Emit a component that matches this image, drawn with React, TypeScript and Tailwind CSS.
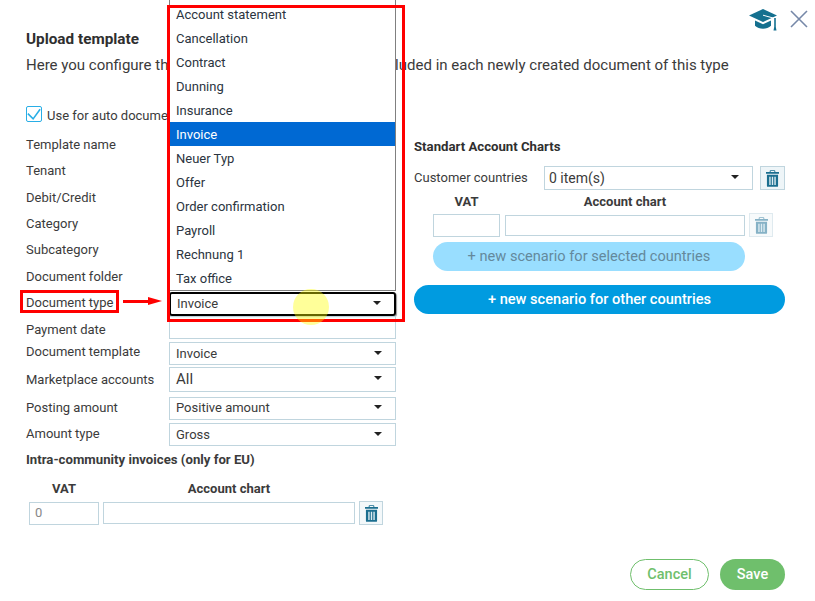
import React from 'react';

// --- Icons ---
const TrashIcon: React.FC<{ className?: string }> = ({ className }) => (
  <svg viewBox="0 0 14 18" className={className} fill="currentColor">
    <path d="M5 0h4a1 1 0 011 1v1h4v2H0V2h4V1a1 1 0 011-1zm0 1v1h4V1z" fillRule="evenodd" />
    <path d="M1 5h12v12a1 1 0 01-1 1H2a1 1 0 01-1-1z" />
    <path d="M3.5 7h1.5v9H3.5zM6.25 7h1.5v9h-1.5zM9 7h1.5v9H9z" fill="#dcebf1" />
  </svg>
);

const CapIcon: React.FC<{ className?: string }> = ({ className }) => (
  <svg viewBox="0 0 29 22" className={className} fill="currentColor">
    <path d="M14 0l14 6.5L14 13 0 6.5z" />
    <path d="M6 11.5l8 3.7 8-3.7v5.2c-2 2-5 3-8 3s-6-1-8-3z" />
    <path d="M14 6.2l11.5 3.2" fill="none" stroke="#fff" strokeWidth="1" />
    <path d="M25.2 9h1.6v9l.7 3.5h-3l.7-3.5z" />
  </svg>
);

const Caret: React.FC = () => <span className="ml-auto mr-[13px] mb-[2px] h-0 w-0 border-x-[4.5px] border-t-[4.5px] border-x-transparent border-t-[#222]" />;

// --- Form pieces ---
const SelectBox: React.FC<{ value?: string; className?: string; caret?: boolean }> = ({ value, className = '', caret = true }) => (
  <div className={`flex w-[227px] items-center border border-[#c0d5de] pl-[6px] text-[13px] text-[#3b3b3b] ${className}`}>
    <span>{value}</span>
    {caret && <Caret />}
  </div>
);

const rows = [
  { label: 'Template name', rowH: 'h-[26px]', ctlH: 'h-[23px]', value: '', caret: false },
  { label: 'Tenant', rowH: 'h-[26px]', ctlH: 'h-[23px]', value: '', caret: true },
  { label: 'Debit/Credit', rowH: 'h-[27px]', ctlH: 'h-[23px]', value: '', caret: true },
  { label: 'Category', rowH: 'h-[26px]', ctlH: 'h-[23px]', value: '', caret: true },
  { label: 'Subcategory', rowH: 'h-[26px]', ctlH: 'h-[23px]', value: '', caret: true },
  { label: 'Document folder', rowH: 'h-[27px]', ctlH: 'h-[23px]', value: '', caret: true },
];

const lowerRows = [
  { label: 'Payment date', rowH: 'h-[25px]', ctlH: 'h-[23px]', value: '', caret: false, ctlClass: '-mt-[3px]', labelClass: 'mt-[3px]' },
  { label: 'Document template', rowH: 'h-[25px]', ctlH: 'h-[23px]', value: 'Invoice', caret: true, ctlClass: '', labelClass: '-mt-[3px]' },
  { label: 'Marketplace accounts', rowH: 'h-[28px]', ctlH: 'h-[25px]', value: 'All', caret: true, ctlClass: '-mt-[2px] text-[15px]', labelClass: '' },
  { label: 'Posting amount', rowH: 'h-[28px]', ctlH: 'h-[23px]', value: 'Positive amount', caret: true, ctlClass: '', labelClass: '' },
  { label: 'Amount type', rowH: 'h-[26px]', ctlH: 'h-[23px]', value: 'Gross', caret: true, ctlClass: '-mt-[1px]', labelClass: '-mt-[2px]' },
];

const options = ['Account statement', 'Cancellation', 'Contract', 'Dunning', 'Insurance', 'Invoice', 'Neuer Typ', 'Offer', 'Order confirmation', 'Payroll', 'Rechnung 1', 'Tax office'];

export default function App() {
  return (
    <div className="relative h-[601px] w-[815px] overflow-hidden bg-white font-['Roboto',sans-serif] text-[13px] text-[#3b3b3b]">
      {/* top icons */}
      <div className="flex h-[30px] items-start justify-end pr-[6px] pt-[6px]">
        <CapIcon className="mr-[11px] mt-[3px] h-[22px] w-[29px] text-[#14708f]" />
        <svg viewBox="0 0 20 20" className="mt-[3px] h-[20px] w-[20px] text-[#7688a8]" stroke="currentColor" strokeWidth="1.6" fill="none">
          <path d="M2 2l16 16M18 2L2 18" />
        </svg>
      </div>

      <div className="pl-[26px]">
        <h1 className="mt-[0px] text-[15.3px] font-bold leading-[18px] text-[#2f2f2f]">Upload template</h1>
        <p className="mt-[8px] text-[15.02px] leading-[18px] text-[#3b3b3b]">
          Here you configure the standard data that should be included in each newly created document of this type
        </p>
        <label className="mt-[31px] flex h-[18px] items-center">
          <span className="flex h-[16px] w-[16px] items-center justify-center rounded-[2px] border border-[#29aee6]">
            <svg viewBox="0 0 16 16" className="h-[15px] w-[15px]" fill="none" stroke="#29aee6" strokeWidth="1.8">
              <path d="M1 7l6 6 8-11" />
            </svg>
          </span>
          <span className="ml-[5px] mt-[3px] whitespace-nowrap">Use for auto document creation</span>
        </label>
      </div>

      <div className="mt-[9px] flex pl-[26px]">
        {/* left column */}
        <div className="w-[388px]">
          {rows.map(r => (
            <div key={r.label} className={`flex items-center ${r.rowH}`}>
              <span className="w-[143px] shrink-0">{r.label}</span>
              <SelectBox className={r.ctlH} value={r.value} caret={r.caret} />
            </div>
          ))}

          <div className="flex h-[26px] items-center">
            <span className="w-[143px] shrink-0">Document type</span>
            <SelectBox className="mt-[2px] h-[24px] rounded-[3px] border-[2px] !border-black shadow-[1px_1px_1px_#999]" value="Invoice" />
          </div>

          {lowerRows.map(r => (
            <div key={r.label} className={`flex items-center ${r.rowH}`}>
              <span className={`w-[143px] shrink-0 ${r.labelClass}`}>{r.label}</span>
              <SelectBox className={`${r.ctlH} ${r.ctlClass}`} value={r.value} caret={r.caret} />
            </div>
          ))}

          <h2 className="mt-[4px] text-[13.2px] font-bold leading-[16px]">Intra-community invoices (only for EU)</h2>
          <div className="ml-[3px] mt-[13px] flex text-[13px] font-bold leading-[16px]">
            <span className="w-[70px] text-center">VAT</span>
            <span className="ml-[4px] w-[252px] text-center">Account chart</span>
          </div>
          <div className="ml-[3px] mt-[4px] flex items-center">
            <div className="flex h-[23px] w-[70px] items-center border border-[#c0d5de] pl-[5px] text-[#888]">0</div>
            <div className="ml-[4px] h-[22px] w-[252px] border border-[#c0d5de]" />
            <button className="ml-[4px] flex h-[24px] w-[24px] items-center justify-center border border-[#c0d5de] bg-[#f3f8fa] text-[#1b6e8f]">
              <TrashIcon className="h-[17px] w-[13px]" />
            </button>
          </div>
        </div>

        {/* right column */}
        <div className="w-[371px]">
          <h2 className="mt-[7px] text-[13.2px] font-bold leading-[16px] text-[#2f2f2f]">Standart Account Charts</h2>
          <div className="mt-[11px] flex h-[24px] items-center">
            <span className="w-[130px] shrink-0">Customer countries</span>
            <div className="flex h-[24px] w-[209px] items-center border border-[#c0d5de] pl-[4px] text-[14px]">
              <span>0 item(s)</span>
              <Caret />
            </div>
            <button className="ml-[7px] flex h-[24px] w-[25px] items-center justify-center border border-[#c0d5de] bg-[#eef5f8] text-[#1b6e8f]">
              <TrashIcon className="h-[17px] w-[13px]" />
            </button>
          </div>
          <div className="ml-[19px] mt-[4px] flex text-[13px] font-bold leading-[16px]">
            <span className="w-[67px] text-center">VAT</span>
            <span className="ml-[5px] w-[240px] text-center">Account chart</span>
          </div>
          <div className="ml-[19px] mt-[3px] flex items-center">
            <div className="h-[23px] w-[67px] border border-[#c0d5de]" />
            <div className="ml-[5px] h-[21px] w-[240px] border border-[#c0d5de]" />
            <button className="ml-[4px] flex h-[24px] w-[24px] items-center justify-center border border-[#dfeaef] bg-[#f7fafb] text-[#86b2c6]">
              <TrashIcon className="h-[17px] w-[13px]" />
            </button>
          </div>
          <button className="ml-[19px] mt-[5px] block h-[29px] w-[312px] rounded-full bg-[#99deff] text-[14.6px] text-[#64899c]">
            + new scenario for selected countries
          </button>
          <button className="mt-[14px] block h-[29px] w-[371px] rounded-full bg-[#009be0] text-[14.6px] font-medium text-white">
            + new scenario for other countries
          </button>
        </div>
      </div>

      {/* footer buttons */}
      <div className="absolute bottom-[11px] right-[30px] flex gap-[11px]">
        <button className="h-[31px] w-[79px] rounded-full border border-[#6fbf6c] bg-white text-[14.5px] font-medium text-[#6fbf6c]">Cancel</button>
        <button className="h-[31px] w-[65px] rounded-full bg-[#6fbf6c] text-[14.5px] font-medium text-white">Save</button>
      </div>

      {/* open dropdown list */}
      <div className="absolute left-[169px] top-0 h-[291px] w-[227px] border-x border-b border-[#808080] bg-white pt-[2px] text-[13px] text-[#2b3440]">
        {options.map(o => (
          <div key={o} className={`flex h-[24px] items-center pl-[6px] pt-[1px] ${o === 'Invoice' ? 'bg-[#0069d3] text-white' : ''}`}>{o}</div>
        ))}
      </div>

      {/* annotations */}
      <div className="absolute left-[167px] top-[5px] h-[317px] w-[238px] border-[3px] border-[#ff0000]" />
      <div className="absolute left-[20px] top-[290px] h-[23px] w-[99px] border-[3px] border-[#ff0000]" />
      <div className="absolute left-[123px] top-[300px] h-[3px] w-[28px] bg-[#ff0000]" />
      <div className="absolute left-[148px] top-[297px] h-0 w-0 border-y-[4.5px] border-l-[14px] border-y-transparent border-l-[#ff0000]" />
      <div className="absolute left-[293px] top-[289px] h-[36px] w-[36px] rounded-full bg-[#ffff00]/40" />
    </div>
  );
}
